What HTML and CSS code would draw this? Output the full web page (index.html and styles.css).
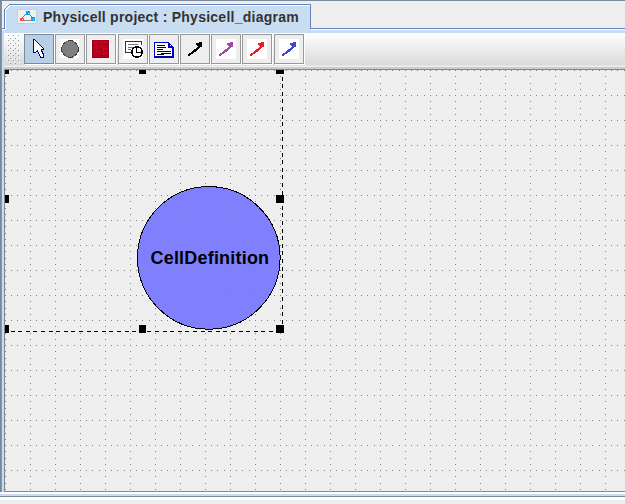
FILE: index.html
```html
<!DOCTYPE html>
<html lang="en">
<head>
<meta charset="utf-8">
<title>Physicell project</title>
<link rel="stylesheet" href="styles.css">
</head>
<body>
<div class="window">
  <header class="tabs">
    <svg class="tab-shape" width="625" height="33" shape-rendering="crispEdges">
      <path d="M2 33V28H5V9L10 4H311V28H625V33Z" fill="#c8ddf2"/>
      <path d="M2 29.5H5.5V10L10 5.5H310" fill="none" stroke="#fff"/>
      <path d="M2 28.5H4.5V9.5L9.5 4.5H310.5V28.5H625" fill="none" stroke="#6382bf"/>
      <path d="M311 29.5H625" stroke="#fff"/>
    </svg>
    <div class="tab">
      <svg class="tab-icon" width="20" height="15" shape-rendering="crispEdges">
        <path fill="#c4d2d2" d="M0 0h20v15H0z"/><path fill="#edf1f0" d="M1 1h18v13H1z"/>
        <path d="M5 8h1v1H5zM6 7h1v1H6zM7 6h1v1H7zM8 5h1v1H8zM13 6h1v1h-1zM14 7h1v1h-1z" fill="#777"/>
        <path d="M7 11.5h7" stroke="#888"/>
        <path fill="#0aa5f0" d="M9 2h4v4H9zM14 8h4v4h-4z"/><path fill="#ff4050" d="M3 9h4v3H3z"/>
        <path fill="#8bd6fa" d="M11 4h1v1h-1zM16 10h1v1h-1z"/><path fill="#fff" d="M5 10h1v1H5z"/>
      </svg>
      <span class="title">Physicell project : Physicell_diagram</span>
    </div>
  </header>
  <nav class="toolbar">
    <svg class="grip" width="14" height="30" shape-rendering="crispEdges">
      <defs><pattern id="grip" width="5" height="5" patternUnits="userSpaceOnUse"><path fill="#8b98a5" d="M2 1h1v1H2zM4 4h1v1H4z"/><path fill="#fff" d="M1 0h1v1H1zM3 3h1v1H3z"/></pattern></defs>
      <path fill="url(#grip)" d="M0 0h14v31H0z"/>
    </svg>
    <button class="tool selected" aria-label="Select"><svg width="20" height="20" shape-rendering="crispEdges"><path d="M4.500 .5V13.500H6.500L8.500 11.500L11.500 18.500H14.500V15.500L12.500 11.500V10.500H14.500V9.500L5.500 .5z" fill="#fff" stroke="#000080"/></svg></button>
    <button class="tool" aria-label="Cell"><svg width="20" height="20" shape-rendering="crispEdges"><path fill="#fff" d="M0 0h19v19H0z"/><circle cx="10" cy="10" r="8.300" fill="#817e80" stroke="#565b56"/><path d="M8 1.5h5M8 18.500h5M1.500 8v5M18.500 8v5M3 4.500h2M15 4.500h2M3 15.500h2M15 15.500h2" stroke="#333c35"/></svg></button>
    <button class="tool" aria-label="Substrate"><svg width="20" height="20" shape-rendering="crispEdges"><path fill="#fff" d="M0 0h19v19H0z"/><path fill="#b40018" d="M1 1h17v18H1z"/><path d="M3 3.5h5M10 3.5h6M3 8.5h3M8 7.5h4M13 9.5h4M4 12.5h5M11 14.5h5M3 16.5h3M5.5 5v6M12.500 8v5" stroke="#cb0822"/><path d="M1 18.500h17M1.500 1v18M17.500 1v18M7 10.500h4M13 5.500h3M9 16.500h3" stroke="#930018"/></svg></button>
    <button class="tool" aria-label="Event"><svg width="20" height="20" shape-rendering="crispEdges"><path fill="#fff" d="M0 0h20v20H0z"/><path d="M8 13.500H2.500V2.500H18.500V6" fill="none" stroke="#333"/><path d="M5 5.500h10M5 8.500h5M5 10.500h3" stroke="#777"/><circle cx="14" cy="13" r="5.200" fill="#fff" stroke="#000" stroke-width="1.500"/><path d="M13.500 9v4.500h4" fill="none" stroke="#000"/></svg></button>
    <button class="tool" aria-label="Note"><svg width="20" height="20" shape-rendering="crispEdges"><path d="M.5 3.500h14l5 5v10H.5z" fill="#fff" stroke="#0000c0"/><path d="M14.500 3v5h5M15.500 4v3h3M1 17.500h18M18.500 8v10" fill="none" stroke="#0000c0"/><path d="M3 6.500h8M3 8.500h9M3 10.500h6M3 12.500h14M7 14.500h10M3 15.500h7" stroke="#000"/></svg></button>
    <button class="tool black" aria-label="Black arrow"><svg width="20" height="20" shape-rendering="crispEdges"><use href="#arrow"/></svg></button>
    <button class="tool purple" aria-label="Purple arrow"><svg width="20" height="20" shape-rendering="crispEdges"><use href="#arrow"/></svg></button>
    <button class="tool red" aria-label="Red arrow"><svg width="20" height="20" shape-rendering="crispEdges"><use href="#arrow"/></svg></button>
    <button class="tool blue" aria-label="Blue arrow"><svg width="20" height="20" shape-rendering="crispEdges"><defs><path id="arrow" fill="currentColor" d="M3 17v-2h1v-1h2v-1h1v-1h1v-1h1v-1h2V9h1V8h1V7h-1V6h-1V4h3V3h3v5h-2v1h-1v1h-1v1h-1v1h-1v1H9v1H8v1H6v1H5v1z"/></defs><use href="#arrow"/></svg></button>
  </nav>
  <main class="canvas">
    <svg width="620" height="421" shape-rendering="crispEdges">
      <defs><pattern id="grid" width="25" height="25" patternUnits="userSpaceOnUse"><path fill="#808080" d="M0 0h1v1H0zM6 0h1v1H6zM12 0h1v1H12zM19 0h1v1H19zM0 6h1v1H0zM0 13h1v1H0zM0 19h1v1H0z"/></pattern></defs>
      <path fill="url(#grid)" d="M0 0h620v421H0z"/>
      <circle cx="203.800" cy="187.900" r="71.300" fill="#8080ff" stroke="#000"/>
      <circle cx="203.800" cy="187.900" r="70" fill="url(#grid)" opacity=".4"/>
      <path d="M277.5 -1V261.5M-2 261.5H278" fill="none" stroke="#000" stroke-dasharray="4 3.6"/>
      <path d="M0 0h4v4H0zM134 0h7v4h-7zM271 0h8v4h-8zM0 125h4v8H0zM271 125h8v8h-8zM0 255h4v8H0zM134 255h7v8h-7zM271 255h8v8h-8z"/>
      <text class="node-label" x="145.500" y="194">CellDefinition</text>
    </svg>
  </main>
  <footer class="bottom"></footer>
</div>
</body>
</html>
```
FILE: styles.css
```css
* { box-sizing: border-box; }
body { margin: 0; background: #eee; font-family: "Liberation Sans", Arial, sans-serif; }
.window { width: 625px; height: 504px; display: grid; grid-template-rows: 32px 37px 422px 12px; border-top: 1px solid #7a8a99; overflow: hidden; background: linear-gradient(90deg, #7a8a99 0 1px, #7a94c4 1px 2px, #c8ddf2 2px 4px, #eee 4px); }
.tabs { display: grid; margin-left: 2px; background: #eee; }
.tab-shape { grid-area: 1 / 1; margin: -1px 0 0 -2px; }
.tab { grid-area: 1 / 1; display: flex; align-items: center; height: 29px; padding-left: 15px; gap: 6px; }
.tab-icon { margin-top: 1px; }
.title { font-size: 14px; font-weight: bold; color: #333; white-space: pre; letter-spacing: .25px; margin-top: 3px; }
.toolbar { display: flex; margin-left: 4px; padding: 1px 0 0 2px; background: linear-gradient(#fff, #dadada 32px, #eee 33px 34px, #ccc 34px 36px, #7a8a99 36px); }
.grip { margin-right: 4px; }
.tool { flex: none; width: 30px; height: 30px; margin-right: 1.2px; padding: 0; display: flex; align-items: center; justify-content: center; border: 1px solid #999; background: #eee; box-shadow: 1px 1px #fff; }
.tool.selected { background: #b8cfe5; border-color: #7a8a99; }
.black { color: #000; }
.purple { color: #a349a4; }
.red { color: #ed1c24; }
.blue { color: #3f48cc; }
.purple svg, .red svg, .blue svg { background: #fff; }
.canvas { margin-left: 4px; border-left: 1px solid #7a8a99; border-bottom: 1px solid #7a8a99; }
.canvas svg { display: block; }
.node-label { font-size: 18px; font-weight: bold; letter-spacing: .2px; }
.bottom { height: 12px; background: linear-gradient(#fff 0 2px, #c8ddf2 2px 4px, #7a8a99 4px 5px, #fff 5px 8px, #eee 8px); }
```
